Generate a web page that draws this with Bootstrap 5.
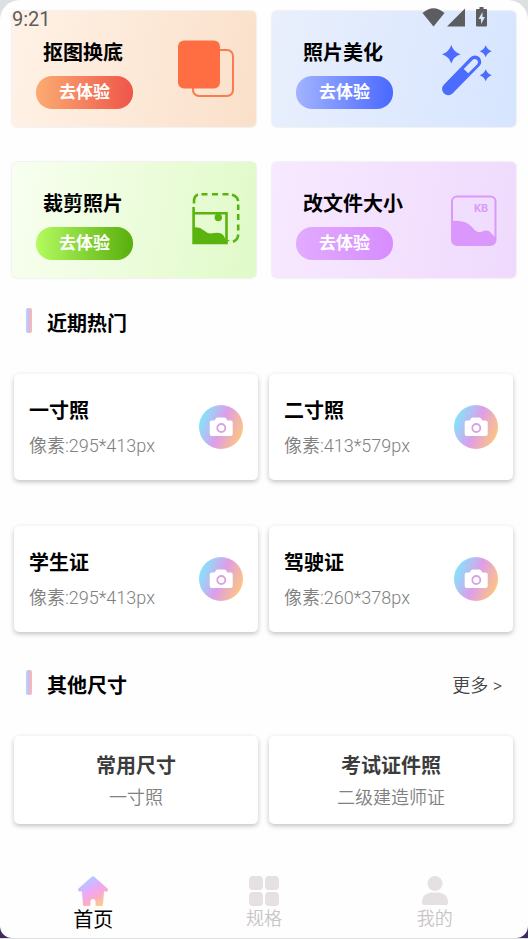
<!DOCTYPE html>
<html lang="zh-CN">
<head>
<meta charset="utf-8">
<meta name="viewport" content="width=device-width, initial-scale=1">
<title>证件照</title>
<link href="https://cdn.jsdelivr.net/npm/bootstrap@5.3.0/dist/css/bootstrap.min.css" rel="stylesheet">
<style>
  body { font-family: Roboto, "Noto Sans CJK SC", sans-serif; font-size: 18px; line-height: 24px; color: #000; background: linear-gradient(#dddfe1 50%, #3f2a5c 50%); }
  .screen { min-height: calc(100vh - 1px); background: #fefefe; border-radius: 20px 20px 12px 12px; padding-top: 11px; }
  .status { top: 7px; left: 12px; right: 40px; color: #5c5d60; z-index: 2; }
  .status time { font-size: 20px; line-height: 24px; }
  .title { font-size: 20px; line-height: 24px; font-weight: 700; margin: 0; }
  .features { padding: 0 12px; column-gap: 16px; row-gap: 35px; }
  .pair { display: grid; grid-template-columns: 1fr 1fr; }
  .feature { border: 0; border-radius: 5px; min-height: 116px; padding: 0 14px 0 24px; box-shadow: 0 0 2px rgba(0,0,0,.18); }
  .feature .title { margin: 12px 0 11px 7px; }
  .f-orange { background: linear-gradient(100deg, #fff2e6, #fae0ca); }
  .f-blue { background: linear-gradient(100deg, #e9effc, #d6e5ff); }
  .f-green { background: linear-gradient(100deg, #f8fff0, #e0fac8); }
  .f-purple { background: linear-gradient(100deg, #f7e9ff, #efdafd); }
  .pill { display: block; border: 0; border-radius: 16px; width: 97px; height: 33px; padding: 0; color: #fff; font-size: 17px; line-height: 33px; font-weight: 700; }
  .p-orange { background: linear-gradient(90deg, #fbac72, #ef554a); }
  .p-blue { background: linear-gradient(90deg, #a3b3ff, #4a69ff); }
  .p-green { background: linear-gradient(90deg, #b4fb60, #58ae0c); }
  .p-purple { background: linear-gradient(90deg, #e2abff, #d68dfd); }
  .section-head { height: 25px; padding: 0 26px; }
  .section-head::before { content: ""; width: 6px; height: 25px; border-radius: 2px; margin-right: 15px; background: linear-gradient(90deg, #a9dcfb, #dcb6ee 50%, #fbbba0); }
  .section-head .title { padding-top: 6px; }
  .head-hot { margin: 30px 0 41px; }
  .head-other { margin: 38px 0 41px; }
  .more { color: #444; text-decoration: none; padding-top: 6px; font-weight: 350; }
  .sizes { padding: 0 15px 0 14px; column-gap: 11px; row-gap: 46px; }
  .tile { background: #fff; border-radius: 5px; color: #000; text-decoration: none; box-shadow: 0 2px 5px rgba(0,0,0,.24); }
  .size-tile { min-height: 106px; padding: 0 15px; }
  .size-tile .title { margin: 2px 0 11px; }
  .note { color: #808080; margin: 0; font-weight: 350; }
  .kind-tile { min-height: 88px; padding: 18px 15px 14px; }
  .kind-tile .title { color: #3c3c3c; margin-bottom: 8px; }
  .tabs { padding: 40px 8px 6px; }
  .tab { color: #c8c5c6; text-decoration: none; gap: 1px; font-weight: 350; }
  .tab.active { color: #000; font-size: 20px; gap: 2px; font-weight: 400; }
</style>
</head>
<body>
<svg width="0" height="0" class="position-absolute" aria-hidden="true">
  <defs>
    <linearGradient id="camFill" x1="0" y1=".3" x2="1" y2=".7">
      <stop offset=".03" stop-color="#83e4fb"/><stop offset=".5" stop-color="#dd9eea"/><stop offset=".95" stop-color="#fcc384"/>
    </linearGradient>
    <linearGradient id="homeFill" x1=".2" y1="0" x2=".8" y2="1">
      <stop offset=".05" stop-color="#a5d0ff"/><stop offset=".45" stop-color="#eaa8fd"/><stop offset=".7" stop-color="#fbacc8"/><stop offset="1" stop-color="#fcd37c"/>
    </linearGradient>
    <symbol id="camera" viewBox="0 0 44 44">
      <circle cx="22" cy="22" r="22" fill="url(#camFill)"/>
      <path fill="#fff" d="M12.700 15.500h2.800l1.600-2.300q.5-.7 1.400-.7h7q.9 0 1.400.7l1.600 2.300h3.200q2 0 2 2v11.500q0 2-2 2h-19q-2 0-2-2V17.500q0-2 2-2z"/>
      <circle cx="22.300" cy="23" r="4" fill="none" stroke="#d9a0e6" stroke-width="1.800"/>
    </symbol>
  </defs>
</svg>

<div class="screen d-flex flex-column position-relative">
  <div class="status position-absolute d-flex justify-content-between align-items-start">
    <time>9:21</time>
    <svg width="66" height="20" fill="currentColor" aria-hidden="true">
      <path d="M.5 6Q11.500-3.500 22.500 6L11.500 19.500z"/>
      <path d="M43 1.500v18H25z"/>
      <path fill-rule="evenodd" d="M57.500 0h4v2H64q1 0 1 1v15.500q0 1-1 1h-9q-1 0-1-1V3q0-1 1-1h2.500zM60.500 5L56.500 12h2.500v5l4-7h-2.500z"/>
    </svg>
  </div>

  <main>
    <section class="features pair">
      <div class="feature f-orange d-flex align-items-center justify-content-between">
        <div><h2 class="title">抠图换底</h2><button type="button" class="pill p-orange">去体验</button></div>
        <svg width="72" height="72" aria-hidden="true">
          <rect x="23" y="17" width="40" height="46" rx="6" fill="none" stroke="#fb7a50" stroke-width="2"/>
          <rect x="8" y="7.500" width="42" height="48" rx="6" fill="#ff6d42"/>
        </svg>
      </div>
      <div class="feature f-blue d-flex align-items-center justify-content-between">
        <div><h2 class="title">照片美化</h2><button type="button" class="pill p-blue">去体验</button></div>
        <svg width="72" height="72" aria-hidden="true">
          <g fill="#4c6cff">
            <path d="M21.300 12Q23.500 19 30.600 21.300 23.500 23.500 21.300 30.600 19 23.500 12 21.300 19 19 21.300 12z"/>
            <path d="M55.700 12.300Q57.200 16.800 61.700 18.300 57.200 19.800 55.700 24.300 54.200 19.800 49.700 18.300 54.200 16.800 55.700 12.300z"/>
            <path d="M55.700 36.300Q57.200 40.800 61.700 42.300 57.200 43.800 55.700 48.300 54.200 43.800 49.700 42.300 54.200 40.800 55.700 36.300z"/>
          </g>
          <path d="M18.300 56L45 28.700" stroke="#4c6cff" stroke-width="12.500" stroke-linecap="round"/>
          <path d="M33.800 36L42.500 27Q45 25 47 27T47 31.500L38.200 40.300z" fill="#dce8fe"/>
        </svg>
      </div>
      <div class="feature f-green d-flex align-items-center justify-content-between">
        <div><h2 class="title">裁剪照片</h2><button type="button" class="pill p-green">去体验</button></div>
        <svg width="72" height="72" aria-hidden="true">
          <g fill="none" stroke="#5bb30e" stroke-width="2.600">
            <path d="M24 19.500v-2Q24 12 28 10.500M31.500 10.200h6M42 10.200h6M52.500 10.200h6M62 10.800Q67 12 68.200 17M68.200 20.500v5.500M68.200 30v6M68.200 40.500v6M68.200 50.500Q68 56 63 57.700"/>
            <path d="M23.600 23v36h32.900V29.300H23.600"/>
          </g>
          <circle cx="48.300" cy="33.500" r="3.700" fill="#5bb30e"/>
          <path fill="#5bb30e" d="M23 43.500q6-1.500 11 3 4 4 10 2.500 7-1.500 10 3l3 7-1 1H23zM55 56h5l-3 2z"/>
        </svg>
      </div>
      <div class="feature f-purple d-flex align-items-center justify-content-between">
        <div><h2 class="title">改文件大小</h2><button type="button" class="pill p-purple">去体验</button></div>
        <svg width="72" height="72" aria-hidden="true">
          <rect x="22" y="12.500" width="43.500" height="48.500" rx="5" fill="none" stroke="#d99afb" stroke-width="2"/>
          <path fill="#da98fd" d="M22 37q13-1.500 20 6 5 7 10 4.500 6-2.500 9 1.500l4.500 4.500V56q0 5-5 5H27q-5 0-5-5z"/>
          <text x="44" y="28" font-size="11" font-weight="700" fill="#d99afb">KB</text>
        </svg>
      </div>
    </section>

    <div class="section-head head-hot d-flex align-items-center"><h2 class="title">近期热门</h2></div>
    <section class="sizes pair">
      <a href="#" class="tile size-tile d-flex align-items-center justify-content-between">
        <div><h3 class="title">一寸照</h3><p class="note">像素:295*413px</p></div>
        <svg width="44" height="44" aria-hidden="true"><use href="#camera"/></svg>
      </a>
      <a href="#" class="tile size-tile d-flex align-items-center justify-content-between">
        <div><h3 class="title">二寸照</h3><p class="note">像素:413*579px</p></div>
        <svg width="44" height="44" aria-hidden="true"><use href="#camera"/></svg>
      </a>
      <a href="#" class="tile size-tile d-flex align-items-center justify-content-between">
        <div><h3 class="title">学生证</h3><p class="note">像素:295*413px</p></div>
        <svg width="44" height="44" aria-hidden="true"><use href="#camera"/></svg>
      </a>
      <a href="#" class="tile size-tile d-flex align-items-center justify-content-between">
        <div><h3 class="title">驾驶证</h3><p class="note">像素:260*378px</p></div>
        <svg width="44" height="44" aria-hidden="true"><use href="#camera"/></svg>
      </a>
    </section>

    <div class="section-head head-other d-flex align-items-center">
      <h2 class="title">其他尺寸</h2><a href="#" class="more ms-auto">更多 &gt;</a>
    </div>
    <section class="sizes pair">
      <a href="#" class="tile kind-tile text-center"><h3 class="title">常用尺寸</h3><p class="note">一寸照</p></a>
      <a href="#" class="tile kind-tile text-center"><h3 class="title">考试证件照</h3><p class="note">二级建造师证</p></a>
    </section>
  </main>

  <nav class="tabs d-flex mt-auto">
    <a href="#" class="tab active flex-fill w-100 d-flex flex-column align-items-center" aria-current="page">
      <svg width="32" height="30" aria-hidden="true"><path fill="url(#homeFill)" d="M14.800.8q1.200-1 2.400 0L30.500 12.500q1.500 2.500-1 3H27L26 28.500q-.2 1.500-1.500 1.500H19.500q-1 0-1-1v-4q-.3-2-2.500-2t-2.500 2v4q0 1-1 1H7.500Q6.200 30 6 28.500L5 15.500H2.500q-2.500-.5-1-3z"/></svg>
      <span>首页</span>
    </a>
    <a href="#" class="tab flex-fill w-100 d-flex flex-column align-items-center">
      <svg width="30" height="30" fill="#e5e0e2" aria-hidden="true"><rect width="14" height="14" rx="4"/><rect x="16" width="14" height="14" rx="4"/><rect y="16" width="14" height="14" rx="4"/><rect x="16" y="16" width="14" height="14" rx="4"/></svg>
      <span>规格</span>
    </a>
    <a href="#" class="tab flex-fill w-100 d-flex flex-column align-items-center">
      <svg width="30" height="30" fill="#e5e0e2" aria-hidden="true"><circle cx="15" cy="7.500" r="7.500"/><path d="M11 16.500h8q9 1.500 9 9V27q0 2-2 2H4q-2 0-2-2v-1.500q0-7.500 9-9z"/></svg>
      <span>我的</span>
    </a>
  </nav>
</div>
<script src="https://cdn.jsdelivr.net/npm/bootstrap@5.3.0/dist/js/bootstrap.bundle.min.js"></script>
</body>
</html>
